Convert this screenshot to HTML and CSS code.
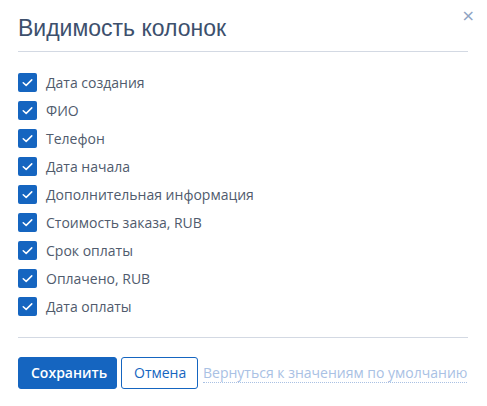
FILE: index.html
```html
<!DOCTYPE html>
<html lang="ru">
<head>
  <meta charset="UTF-8" />
  <title>Видимость колонок</title>
  <link rel="stylesheet" href="styles.css">
</head>
<body>
  <div class="dialog">
    <div class="dialog-header">
      <h2>Видимость колонок</h2>
      <span class="close-btn">&times;</span>
    </div>

    <div class="columns-list">
      <label class="check-row"><span class="check-box"><svg viewBox="0 0 20 20"><path d="M5.5 10.2 L8.6 13 L14.5 7.2" /></svg></span>Дата создания</label>
      <label class="check-row"><span class="check-box"><svg viewBox="0 0 20 20"><path d="M5.5 10.2 L8.6 13 L14.5 7.2" /></svg></span>ФИО</label>
      <label class="check-row"><span class="check-box"><svg viewBox="0 0 20 20"><path d="M5.5 10.2 L8.6 13 L14.5 7.2" /></svg></span>Телефон</label>
      <label class="check-row"><span class="check-box"><svg viewBox="0 0 20 20"><path d="M5.5 10.2 L8.6 13 L14.5 7.2" /></svg></span>Дата начала</label>
      <label class="check-row"><span class="check-box"><svg viewBox="0 0 20 20"><path d="M5.5 10.2 L8.6 13 L14.5 7.2" /></svg></span>Дополнительная информация</label>
      <label class="check-row"><span class="check-box"><svg viewBox="0 0 20 20"><path d="M5.5 10.2 L8.6 13 L14.5 7.2" /></svg></span>Стоимость заказа, RUB</label>
      <label class="check-row"><span class="check-box"><svg viewBox="0 0 20 20"><path d="M5.5 10.2 L8.6 13 L14.5 7.2" /></svg></span>Срок оплаты</label>
      <label class="check-row"><span class="check-box"><svg viewBox="0 0 20 20"><path d="M5.5 10.2 L8.6 13 L14.5 7.2" /></svg></span>Оплачено, RUB</label>
      <label class="check-row"><span class="check-box"><svg viewBox="0 0 20 20"><path d="M5.5 10.2 L8.6 13 L14.5 7.2" /></svg></span>Дата оплаты</label>
    </div>

    <div class="dialog-footer">
      <div class="btn btn-primary">Сохранить</div>
      <div class="btn btn-outline">Отмена</div>
      <a href="#" class="reset-link">Вернуться к значениям по умолчанию</a>
    </div>
  </div>
</body>
</html>
```

FILE: styles.css
```css
:root {
  --text: #505b6d;
  --title: #3d506d;
  --primary: #1565c0;
  --line: #d3d9e3;
  --link: #a9c1e4;
}

* { box-sizing: border-box; }

body {
  margin: 0;
  background: #fff;
  font-family: "Open Sans", sans-serif;
  color: var(--text);
}

.dialog {
  width: 487px;
  padding: 0 19px 0 18px;
}

.dialog-header {
  position: relative;
  padding-top: 14px;
  border-bottom: 1px solid var(--line);
  height: 52px;
}

.dialog-header h2 {
  margin: 0;
  font-family: "Liberation Sans", Arial, sans-serif;
  font-weight: normal;
  font-size: 23px;
  line-height: 28px;
  color: var(--title);
}

.close-btn {
  position: absolute;
  right: -7px;
  top: 6px;
  font-family: "DejaVu Sans", sans-serif;
  font-size: 16px;
  line-height: 20px;
  color: #8ea3c2;
  cursor: pointer;
}

.columns-list {
  padding: 16px 0 17px;
  border-bottom: 1px solid var(--line);
}

.check-row {
  display: flex;
  align-items: center;
  gap: 9px;
  height: 28px;
  font-size: 14px;
  cursor: pointer;
}

.check-box {
  width: 19px;
  height: 19px;
  border-radius: 2px;
  background: var(--primary);
  display: flex;
}

.check-box svg {
  width: 19px;
  height: 19px;
  fill: none;
  stroke: #fff;
  stroke-width: 1.6;
  stroke-linecap: round;
  stroke-linejoin: round;
}

.dialog-footer {
  display: flex;
  align-items: center;
  gap: 4px;
  padding-top: 19px;
}

.btn {
  height: 32px;
  line-height: 30px;
  padding: 0 12px;
  border-radius: 3px;
  font-size: 14px;
  border: 1px solid var(--primary);
  cursor: pointer;
}

.btn-primary {
  background: var(--primary);
  color: #fff;
  width: 99px;
  text-align: center;
  font-weight: 600;
}

.btn-outline {
  background: #fff;
  color: var(--primary);
  width: 77px;
  text-align: center;
}

.reset-link {
  margin-left: 1px;
  font-size: 14px;
  color: var(--link);
  text-decoration: none;
  border-bottom: 1px dotted var(--link);
  line-height: 18px;
}
```
